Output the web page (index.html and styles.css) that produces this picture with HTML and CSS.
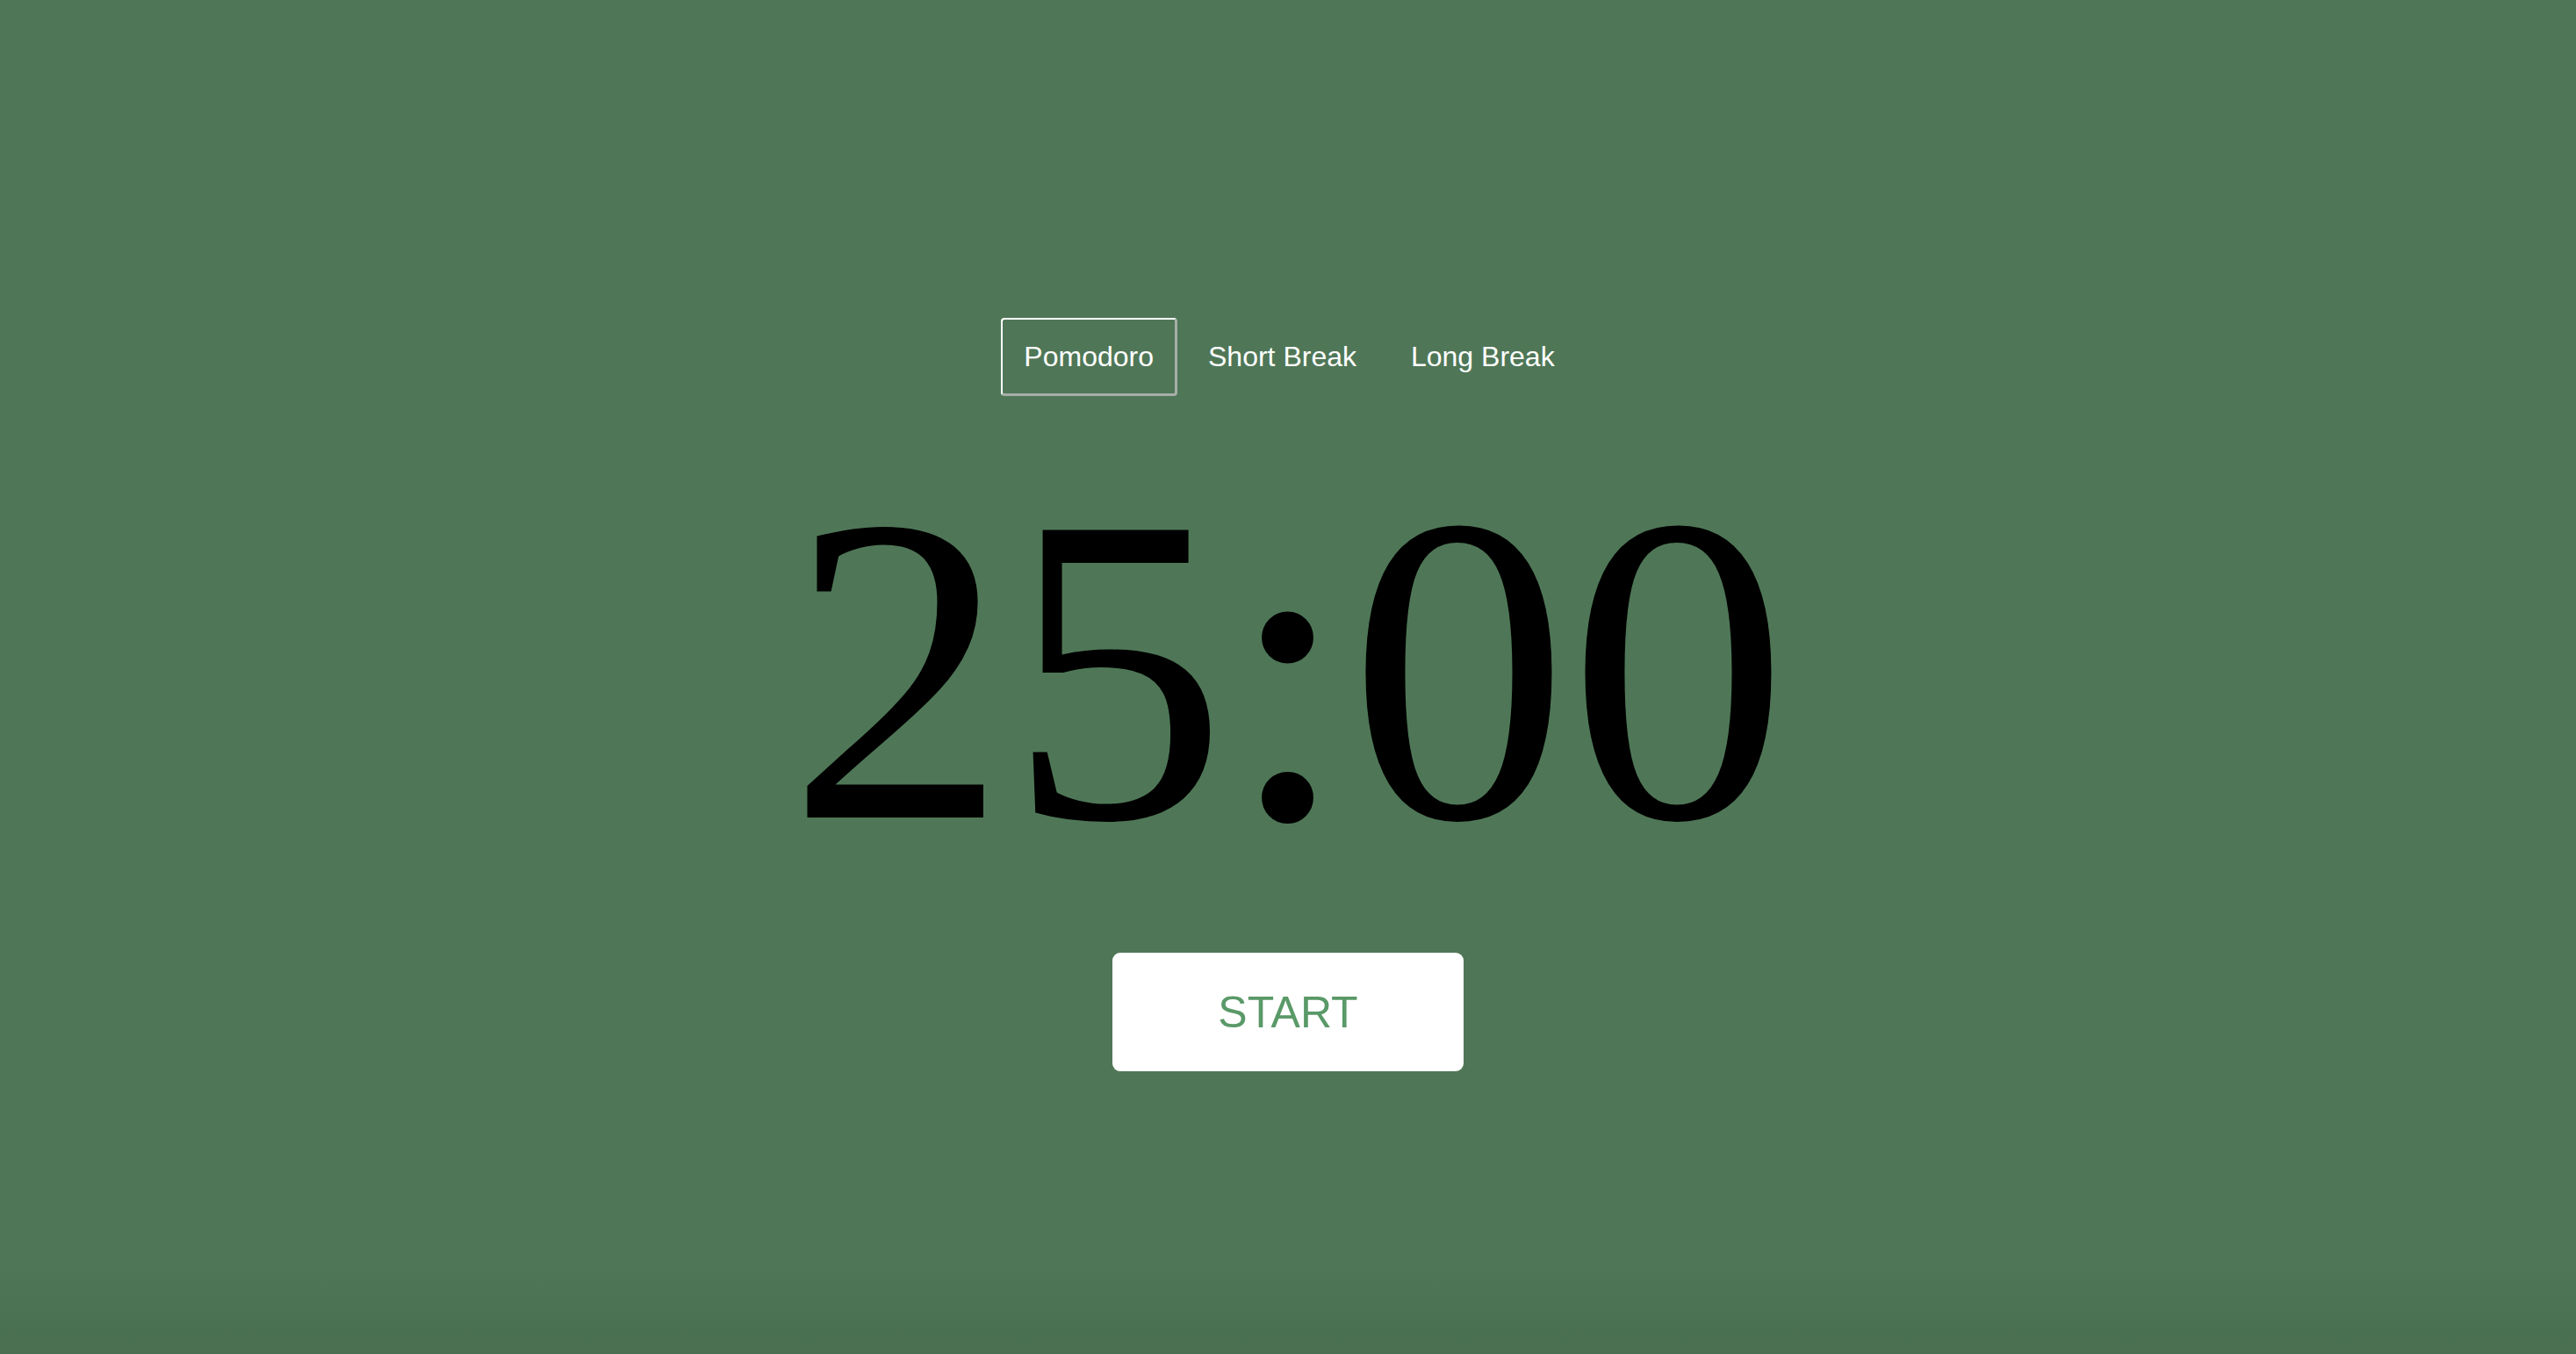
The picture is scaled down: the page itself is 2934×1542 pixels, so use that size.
FILE: index.html
```html
<!DOCTYPE html>
<html lang="en">
<head>
<meta charset="utf-8">
<title>Pomodoro</title>
<link rel="stylesheet" href="styles.css">
</head>
<body>
<main class="app">
  <nav class="tabs">
    <button class="tab tab-active">Pomodoro</button>
    <button class="tab">Short Break</button>
    <button class="tab">Long Break</button>
  </nav>
  <div class="timer">25:00</div>
  <button class="start">START</button>
</main>
</body>
</html>
```

FILE: styles.css
```css
html, body {
  margin: 0;
  padding: 0;
}
body {
  min-height: 100vh;
  background: linear-gradient(to bottom, #4f7757 0, #4f7757 calc(100% - 110px), #496e50 100%);
  font-family: "Liberation Sans", Arial, sans-serif;
}
.app {
  display: flex;
  flex-direction: column;
  align-items: center;
  padding-top: 362px;
}
.tabs {
  display: flex;
  gap: 9px;
  padding-left: 4px;
}
.tab {
  font-family: "Liberation Sans", Arial, sans-serif;
  font-size: 32px;
  line-height: 36px;
  color: #ffffff;
  background: transparent;
  border: 2px solid transparent;
  border-right-width: 3px;
  border-bottom-width: 3px;
  border-radius: 4px;
  padding: 24px 24px;
  margin: 0;
  cursor: pointer;
}
.tab-active {
  border-color: #ffffff #a7aea8 #a7aea8 #ffffff;
}
.timer {
  font-family: "Liberation Serif", "Times New Roman", serif;
  font-size: 500px;
  line-height: 1;
  color: #000000;
  margin-top: 61px;
}
.start {
  margin-top: 73px;
  width: 400px;
  height: 135px;
  border: none;
  border-radius: 9px;
  background: #ffffff;
  color: #5a9968;
  font-family: "Liberation Sans", Arial, sans-serif;
  font-size: 50px;
  padding: 0;
  cursor: pointer;
}
```
